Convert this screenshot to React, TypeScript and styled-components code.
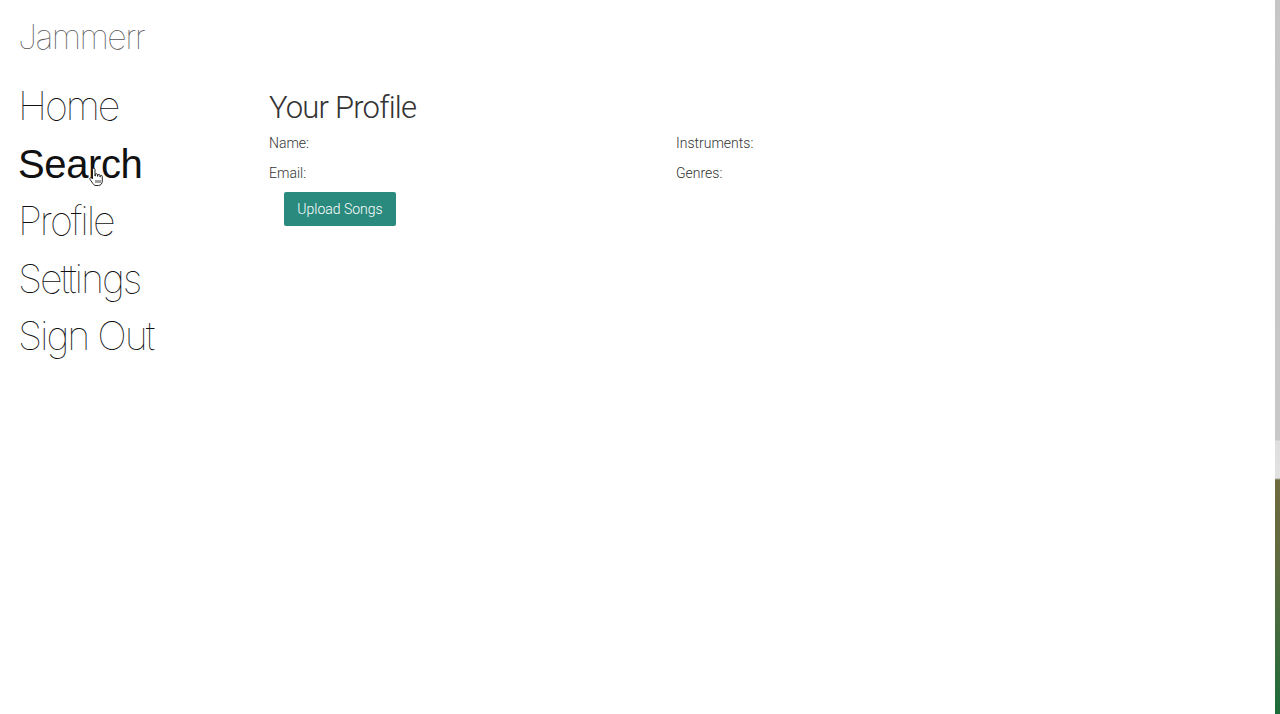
import React from "react";
import styled, { createGlobalStyle } from "styled-components";

const Global = createGlobalStyle`
  html, body { margin: 0; padding: 0; background: #ffffff; }
  body { font-family: "Roboto", "Liberation Sans", sans-serif; }
  * { box-sizing: border-box; }
`;

const Screen = styled.div`
  display: flex;
  width: 1280px;
  height: 714px;
  overflow: hidden;
`;

const Window = styled.div`
  flex: 1;
  display: flex;
  flex-direction: column;
  background: #ffffff;
`;

const Edge = styled.div`
  width: 5px;
  background: linear-gradient(
    to bottom,
    #c6c6c6 0px,
    #c8c8c8 440px,
    #dedede 441px,
    #e2e2e2 478px,
    #6e6a3e 480px,
    #5f6a3e 560px,
    #3f6a3c 640px,
    #1b6c3a 714px
  );
`;

const Header = styled.header`
  padding: 13px 0 0 18px;
  height: 76px;
`;

const Brand = styled.div`
  font-family: "Inter", "Roboto", sans-serif;
  font-weight: 100;
  font-size: 34px;
  line-height: 48px;
  color: #555;
  letter-spacing: -1.6px;
`;

const Body = styled.div`
  display: flex;
`;

const Sidebar = styled.nav`
  width: 269px;
  padding: 2px 0 0 18px;
  display: flex;
  flex-direction: column;
  align-items: flex-start;
`;

const NavItem = styled.a<{ $active?: boolean }>`
  position: relative;
  font-family: ${(p) =>
    p.$active ? '"Liberation Sans", Arial, sans-serif' : '"Inter", "Roboto", sans-serif'};
  font-size: ${(p) => (p.$active ? "40px" : "39.5px")};
  line-height: 57.5px;
  font-weight: ${(p) => (p.$active ? 400 : 100)};
  color: #111;
  letter-spacing: ${(p) => (p.$active ? "-0.4px" : "-2.1px")};
  text-decoration: none;
  cursor: pointer;
  white-space: nowrap;
`;

const Pointer = styled.svg`
  position: absolute;
  left: 69px;
  top: 32px;
  width: 16px;
  height: 20px;
  pointer-events: none;
`;

const Main = styled.main`
  flex: 1;
  display: flex;
  flex-direction: column;
  padding-top: 12px;
`;

const Title = styled.h2`
  margin: 0;
  font-family: "Roboto", "Liberation Sans", sans-serif;
  font-weight: 300;
  font-size: 31px;
  line-height: 40px;
  color: #333;
  letter-spacing: -0.8px;
`;

const InfoGrid = styled.div`
  display: grid;
  grid-template-columns: 407px 407px;
  grid-auto-rows: 30px;
`;

const Field = styled.div`
  font-family: "Roboto", "Liberation Sans", sans-serif;
  font-weight: 300;
  font-size: 14px;
  line-height: 30px;
  color: #333;
`;

const UploadButton = styled.button`
  margin: 4px 0 0 15px;
  align-self: flex-start;
  width: 112px;
  height: 34px;
  border: none;
  border-radius: 2px;
  background: #2a8a7d;
  color: #ffffff;
  font-family: "Roboto", "Liberation Sans", sans-serif;
  font-weight: 300;
  font-size: 14px;
  padding: 0;
  cursor: pointer;
`;

export default function App() {
  return (
    <>
      <Global />
      <Screen>
        <Window>
          <Header>
            <Brand>Jammerr</Brand>
          </Header>
          <Body>
            <Sidebar>
              <NavItem>Home</NavItem>
              <NavItem $active>
                Search
                <Pointer viewBox="0 0 16 20">
                  <path
                    d="M5.5 1.5c0-.8.6-1.2 1.2-1.2s1.3.4 1.3 1.2V8h.3V6.8c0-.7.5-1.1 1.1-1.1s1.1.4 1.1 1.1V8.3h.3V7.5c0-.7.5-1.1 1.1-1.1s1.1.4 1.1 1.1V9h.3v-.6c0-.7.5-1 1-1s1 .3 1 1V13c0 2.6-1.5 4.5-4 4.5H9c-1.5 0-2.4-.8-3.2-2L3 11.3c-.4-.6-.3-1.3.3-1.6.6-.3 1.2-.1 1.6.4l.6.9V1.5z"
                    fill="#ffffff"
                    stroke="#111"
                    strokeWidth="0.9"
                    strokeLinejoin="round"
                  />
                  <path d="M9 12v3M11 12v3M13 12v3" stroke="#111" strokeWidth="0.8" />
                </Pointer>
              </NavItem>
              <NavItem>Profile</NavItem>
              <NavItem>Settings</NavItem>
              <NavItem>Sign Out</NavItem>
            </Sidebar>
            <Main>
              <Title>Your Profile</Title>
              <InfoGrid>
                <Field>Name:</Field>
                <Field>Instruments:</Field>
                <Field>Email:</Field>
                <Field>Genres:</Field>
              </InfoGrid>
              <UploadButton>Upload Songs</UploadButton>
            </Main>
          </Body>
        </Window>
        <Edge />
      </Screen>
    </>
  );
}
